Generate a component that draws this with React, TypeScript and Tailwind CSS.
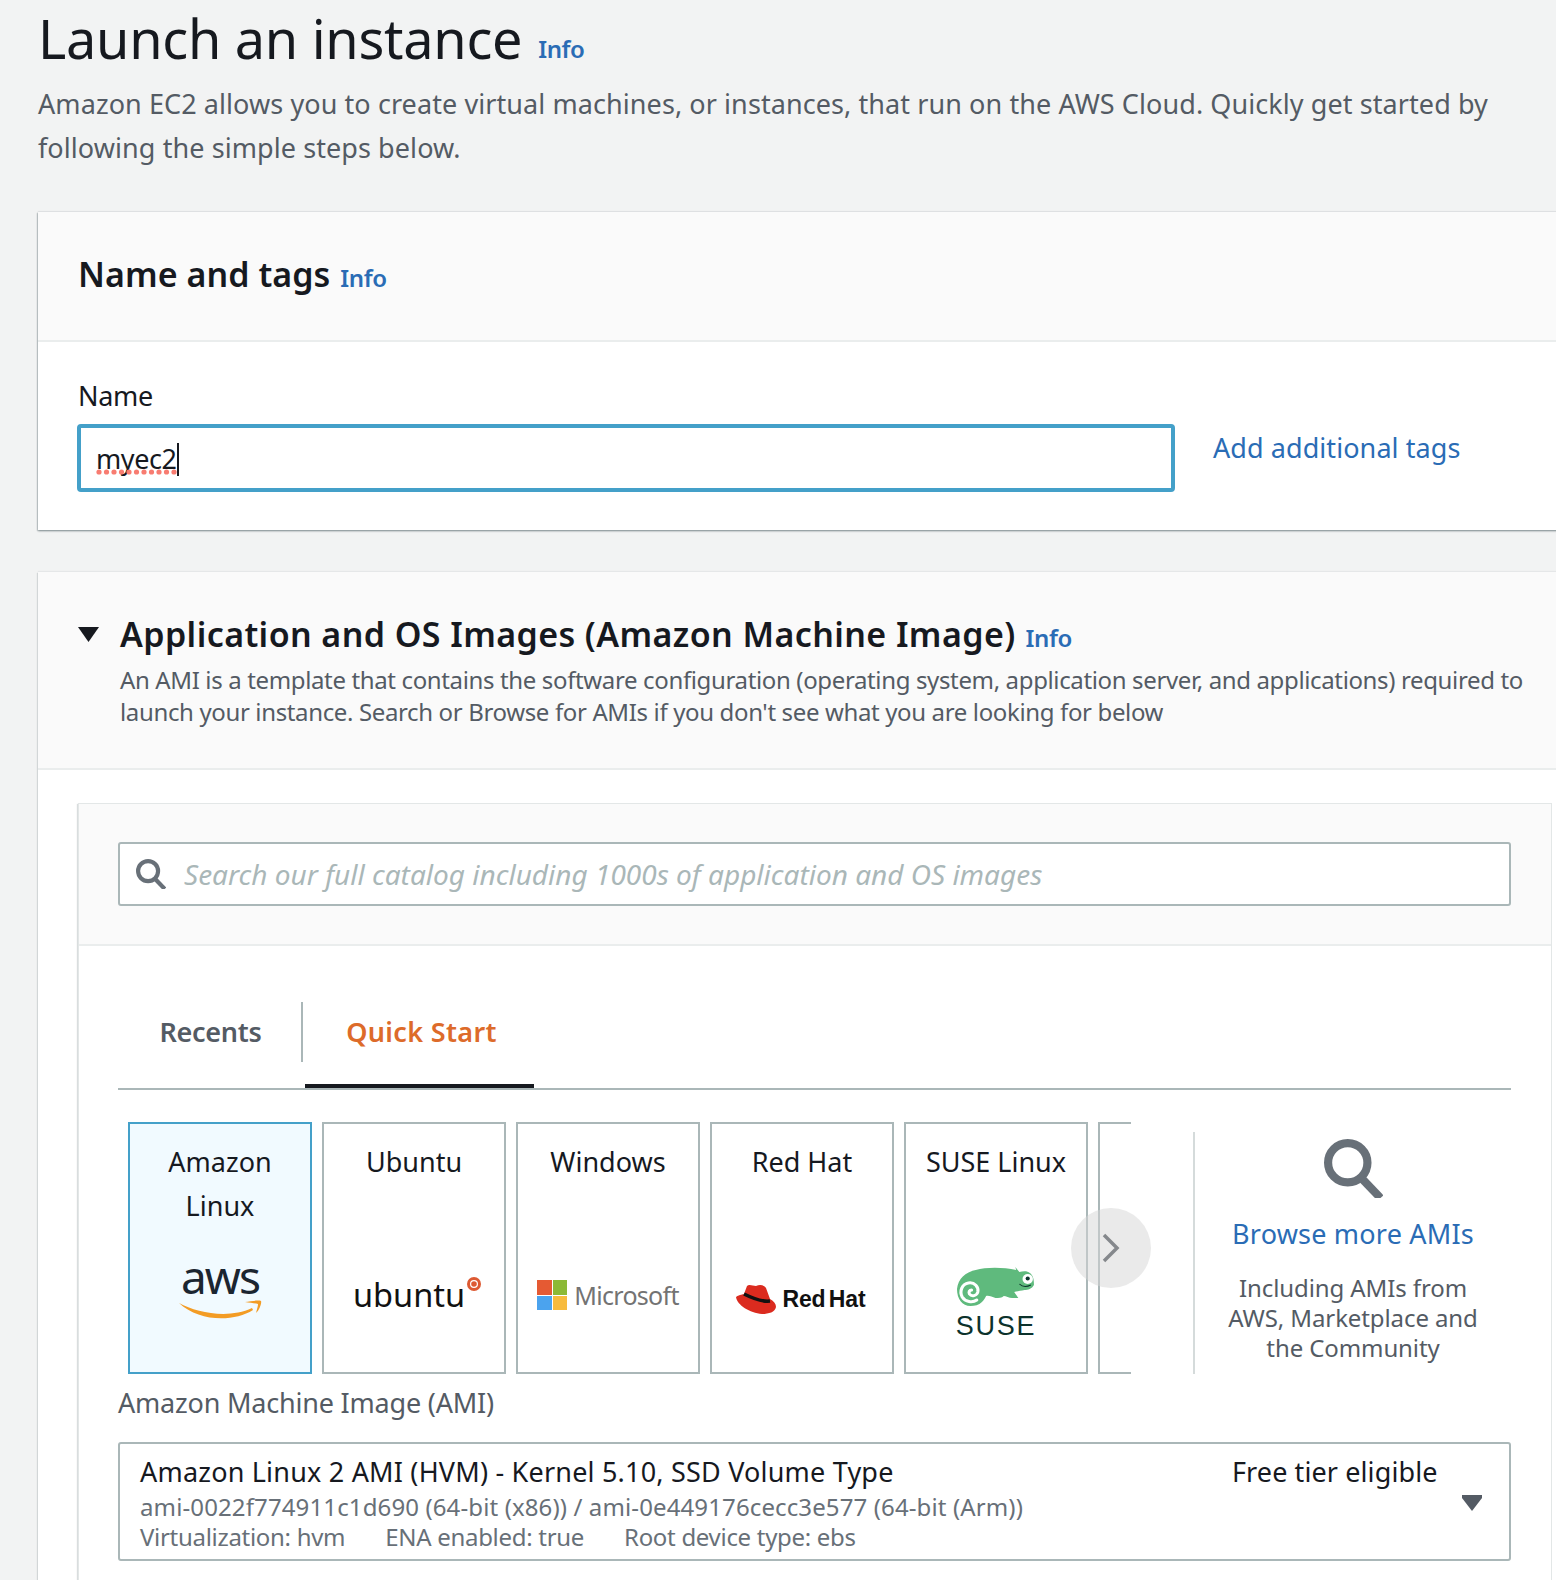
import React from "react";

function Info({ className }: { className: string }) {
  return <span className={`font-semibold tracking-[-0.4px] text-[#2a6cb5] ${className}`}>Info</span>;
}

function Search({ className }: { className: string }) {
  return (
    <svg viewBox="0 0 36 36" className={className} fill="none" stroke="currentColor" strokeWidth="5">
      <circle cx="14.5" cy="14.5" r="12" />
      <path d="M23 24 L34.5 36" />
    </svg>
  );
}

function Tile({ title, selected, children }: { title: React.ReactNode; selected?: boolean; children: React.ReactNode }) {
  return (
    <div className={`flex h-[252px] w-[184px] shrink-0 flex-col items-center border-2 pt-[16px] text-center text-[27px] leading-[44px] text-[#16191f] ${selected ? "border-[#44a0c9] bg-[#f1faff]" : "border-[#aab7b8] bg-white"}`}>
      <div className="h-[88px] whitespace-nowrap">{title}</div>
      <div className="flex h-[110px] w-full items-center justify-center">{children}</div>
    </div>
  );
}

export default function App() {
  return (
    <div className="h-[1580px] w-[1556px] overflow-hidden bg-[#f2f3f3] pl-[38px] font-['Noto_Sans','Open_Sans',sans-serif] text-[#16191f]">
      <div className="flex h-[76px] items-end">
        <h1 className="text-[54px] leading-[76px] tracking-[-0.27px]">Launch an instance</h1>
        <Info className="mb-[10px] ml-[16px] text-[24px] leading-[34px]" />
      </div>
      <p className="mt-[6px] w-[1500px] text-[27px] leading-[43.5px] tracking-[0.08px] text-[#545b64]">
        Amazon EC2 allows you to create virtual machines, or instances, that run on the AWS Cloud. Quickly get started by following the simple steps below.
      </p>

      <section className="mt-[43px] w-[1600px] bg-white shadow-[0_1px_2px_0_rgba(0,28,36,0.4),-1px_1px_1px_0_rgba(0,28,36,0.12),0_-1px_1px_0_rgba(0,28,36,0.05)]">
        <div className="flex h-[130px] items-center border-b-2 border-[#eaeded] bg-[#fafafa] pl-[40px]">
          <h2 className="-mt-[3px] text-[34px] font-semibold tracking-[0.05px]">Name and tags</h2>
          <Info className="ml-[10px] mt-[4px] text-[24px]" />
        </div>
        <div className="h-[188px] pl-[39px] pt-[34px]">
          <div className="pl-px text-[27px] leading-[40px] tracking-[-0.3px]">Name</div>
          <div className="mt-[8px] flex items-center">
            <div className="flex h-[68px] w-[1098px] items-center rounded-[4px] border-[4px] border-[#44a0c9] bg-white pl-[15px] pt-[2px]">
              <span className="relative text-[27px] leading-[34px] tracking-[-0.4px]">
                myec2
                <svg viewBox="0 0 82 6" className="absolute left-0 top-[27px] h-[6px] w-[82px]" fill="#f87c71">
                  {[3, 10.5, 18, 25.5, 33, 40.5, 48, 55.5, 63, 70.5, 78].map((x) => (
                    <circle key={x} cx={x} cy="3" r="2.6" />
                  ))}
                </svg>
              </span>
              <span className="h-[33px] w-[2px] bg-[#16191f]" />
            </div>
            <a className="-mt-[20px] ml-[38px] text-[27px] tracking-[0.07px] text-[#2a6cb5]">Add additional tags</a>
          </div>
        </div>
      </section>

      <section className="mt-[42px] w-[1600px] bg-white shadow-[-1px_1px_1px_0_rgba(0,28,36,0.12),0_-1px_1px_0_rgba(0,28,36,0.05)]">
        <div className="h-[198px] border-b-2 border-[#eaeded] bg-[#fafafa] pl-[40px] pt-[38px]">
          <div className="flex items-center">
            <svg viewBox="0 0 21 15" className="h-[15px] w-[21px] text-[#16191f]" fill="currentColor"><path d="M0 0H21L10.5 15Z" /></svg>
            <h2 className="ml-[21px] text-[34px] font-semibold leading-[48px] tracking-[0.4px]">Application and OS Images (Amazon Machine Image)</h2>
            <Info className="ml-[10px] mt-[8px] text-[24px]" />
          </div>
          <p className="ml-[42px] mt-[6px] w-[1420px] text-[24px] leading-[32px] tracking-[-0.36px] text-[#545b64]">
            An AMI is a template that contains the software configuration (operating system, application server, and applications) required to launch your instance. Search or Browse for AMIs if you don't see what you are looking for below
          </p>
        </div>

        <div className="ml-[40px] mt-[33px] w-[1474px] border border-[#e3e7e7] bg-white pb-[40px] shadow-[-1px_1px_1px_0_rgba(0,28,36,0.15)]">
          <div className="h-[142px] border-b-2 border-[#eaeded] bg-[#fafafa] pl-[39px] pr-[40px] pt-[38px]">
            <div className="flex h-[64px] items-center rounded-[3px] border-2 border-[#aab7b8] bg-white pl-[16px]">
              <Search className="h-[30px] w-[30px] text-[#687078]" />
              <span className="ml-[18px] text-[28px] italic text-[#aab7b8]">Search our full catalog including 1000s of application and OS images</span>
            </div>
          </div>

          <div className="pl-[39px] pr-[40px]">
            <div className="relative flex h-[144px] items-end border-b-2 border-[#aab7b8]">
              <div className="mb-[26px] flex h-[60px] w-[185px] items-center justify-center border-r-2 border-[#aab7b8] pl-[2px] text-[27px] font-semibold tracking-[-0.3px] text-[#545b64]">Recents</div>
              <div className="ml-[2px] flex h-[87px] w-[229px] items-start justify-center border-b-[4px] border-[#16191f] pl-[4px] pt-[11px] text-[27px] font-semibold tracking-[0.35px] text-[#dd6b2a]">Quick Start</div>
            </div>

            <div className="mt-[32px] flex">
              <div className="relative h-[252px] w-[1015px] shrink-0">
                <div className="ml-[10px] flex h-full gap-[10px] overflow-hidden">
                  <Tile title={<>Amazon<br />Linux</>} selected>
                    <div className="flex translate-y-[6px] flex-col items-center">
                      <span className="text-[46px] leading-[34px] tracking-[-2px] text-[#1b2530]">aws</span>
                      <svg viewBox="0 0 83 19" className="mt-[7px] h-[19px] w-[83px]" fill="#f39c25">
                        <path d="M0 3 C18 13 50 19 73 8 L74 10 C55 22 20 22 0 3Z" />
                        <path d="M66 2 C72 1 80 0 82 1 C83 3 80 11 77 13 C78 9 79 6 79 4 C76 3 71 3 66 2Z" />
                      </svg>
                    </div>
                  </Tile>
                  <Tile title="Ubuntu">
                    <div className="flex translate-x-[3px] translate-y-[12px] items-start">
                      <span className="text-[32.5px] leading-[44px] text-[#111]">ubuntu</span>
                      <svg viewBox="0 0 14 14" className="ml-[2px] mt-[4px] h-[14px] w-[14px]">
                        <circle cx="7" cy="7" r="7" fill="#dd5a33" />
                        <circle cx="7" cy="7" r="3.4" fill="none" stroke="#fff" strokeWidth="1.2" />
                      </svg>
                    </div>
                  </Tile>
                  <Tile title="Windows">
                    <div className="flex translate-y-[12px] items-center gap-[7px]">
                      <div className="grid h-[30px] w-[30px] grid-cols-2 gap-[1px]">
                        <div className="bg-[#e55a33]" /><div className="bg-[#8cb936]" />
                        <div className="bg-[#4ba3ee]" /><div className="bg-[#f7bb3e]" />
                      </div>
                      <span className="text-[25px] tracking-[-0.7px] text-[#737373]">Microsoft</span>
                    </div>
                  </Tile>
                  <Tile title="Red Hat">
                    <div className="flex -translate-x-[1px] translate-y-[16px] items-center gap-[6px]">
                      <svg viewBox="0 0 40 30" className="h-[30px] w-[40px]">
                        <path d="M0 13 C4 10 7 11 8 10 L11 2 C13 0 17 2 20 2 C24 0 28 1 30 4 L34 15 C38 17 40 20 40 23 C39 28 33 30 26 30 C14 29 1 21 0 13Z" fill="#db2b1f" />
                        <path d="M8 10 C16 14 26 18 34 17" fill="none" stroke="#111" strokeWidth="3.5" />
                      </svg>
                      <span className="font-['Liberation_Sans',sans-serif] text-[23px] font-bold tracking-[-0.1px] text-[#111] [word-spacing:-3px]">Red Hat</span>
                    </div>
                  </Tile>
                  <Tile title="SUSE Linux">
                    <div className="flex translate-y-[17px] flex-col items-center pt-[8px]">
                      <svg viewBox="0 0 75 40" preserveAspectRatio="none" className="h-[40px] w-[78px]">
                        <path d="M13 39 C5 39 0 32 0 22 C1 12 8 5 18 3 C28 0 44 0 57 3 L56 0 L60 5 C64 4 68 4 70 6 C73 8 74 12 74 18 C72 22 68 23 65 23 C61 24 58 24 55 25 C56 27 58 29 59 31 L53 31 C50 31 47 29 45 29 C43 31 40 31 37 31 C34 30 30 28 28 29 C27 31 26 33 24 35 C21 38 17 39 13 39Z" fill="#5fba7d" />
                        <path d="M19 33 C15 36 8 35 5 30 C2 24 5 17 11 16 C17 15 21 20 20 25 C19 29 14 30 12 27 C11 25 12 23 14 23" fill="none" stroke="#fff" strokeWidth="3" strokeLinecap="round" />
                        <circle cx="68" cy="12" r="5" fill="#fff" />
                        <circle cx="68" cy="11.5" r="2" fill="#0c322c" />
                        <path d="M60 17 C63 20 67 20 71 18" fill="none" stroke="#0c322c" strokeWidth="1" />
                      </svg>
                      <span className="mt-[4px] font-['Liberation_Sans',sans-serif] text-[27px] leading-[30px] tracking-[1.8px] text-[#0c322c]">SUSE</span>
                    </div>
                  </Tile>
                  <div className="h-[252px] w-[33px] shrink-0 border-y-2 border-l-2 border-[#aab7b8]" />
                </div>
                <div className="absolute left-[953px] top-[86px] flex h-[80px] w-[80px] items-center justify-center rounded-full bg-[#d5d5d5]/50">
                  <svg viewBox="0 0 18 30" className="h-[30px] w-[18px]" fill="none" stroke="#85888c" strokeWidth="3.5"><path d="M2 2 L15 15 L2 28" /></svg>
                </div>
              </div>

              <div className="ml-[60px] mt-[10px] flex h-[242px] w-[318px] flex-col items-center border-l-2 border-[#d5dbdb]">
                <Search className="mt-[7px] h-[59px] w-[59px] text-[#687078]" />
                <a className="mt-[16px] whitespace-nowrap text-[27px] leading-[40px] tracking-[0.2px] text-[#2a6cb5]">Browse more AMIs</a>
                <p className="mt-[19px] w-[270px] text-center text-[24px] leading-[30px] tracking-[-0.1px] text-[#545b64]">Including AMIs from AWS, Marketplace and the Community</p>
              </div>
            </div>

            <div className="mt-[9px] text-[27px] leading-[40px] tracking-[-0.2px] text-[#545b64]">Amazon Machine Image (AMI)</div>
            <div className="mt-[19px] flex h-[119px] rounded-[3px] border-2 border-[#aab7b8] bg-white pl-[20px]">
              <div className="w-[1092px] pt-[8px]">
                <div className="text-[27px] leading-[40px] tracking-[0.2px]">Amazon Linux 2 AMI (HVM) - Kernel 5.10, SSD Volume Type</div>
                <div className="text-[24px] leading-[30px] tracking-[0.12px] text-[#687078]">ami-0022f774911c1d690 (64-bit (x86)) / ami-0e449176cecc3e577 (64-bit (Arm))</div>
                <div className="flex gap-[40px] text-[24px] leading-[30px] tracking-[-0.3px] text-[#687078]">
                  <span>Virtualization: hvm</span><span>ENA enabled: true</span><span>Root device type: ebs</span>
                </div>
              </div>
              <div className="whitespace-nowrap pt-[8px] text-[27px] leading-[40px] tracking-[0.1px]">Free tier eligible</div>
              <svg viewBox="0 0 20 16" className="ml-auto mr-[27px] mt-[51px] h-[16px] w-[20px] text-[#545b64]" fill="currentColor"><path d="M0 0H20V3L10 16 0 3Z" /></svg>
            </div>
          </div>
        </div>
      </section>
    </div>
  );
}
